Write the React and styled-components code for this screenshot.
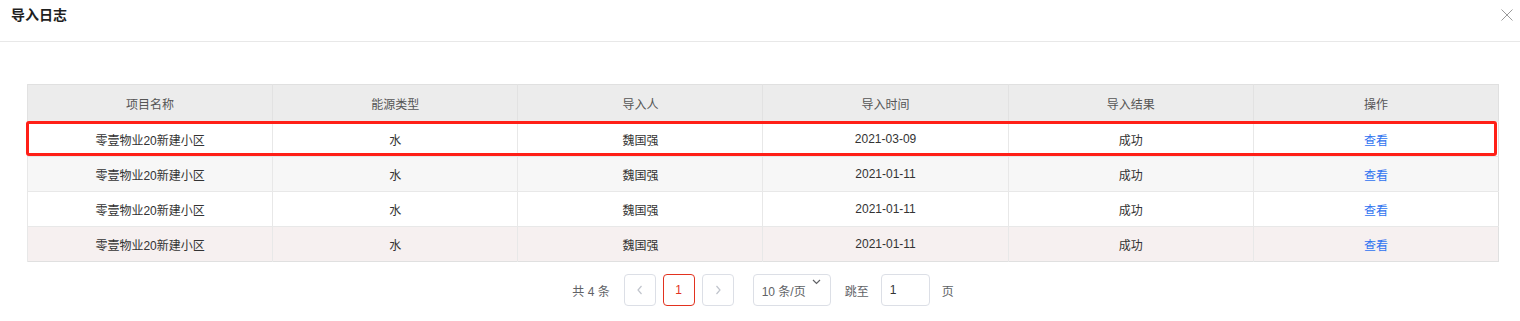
import React from "react";
import styled, { createGlobalStyle } from "styled-components";

const logs = [
  { name: "零壹物业20新建小区", type: "水", user: "魏国强", time: "2021-03-09", result: "成功" },
  { name: "零壹物业20新建小区", type: "水", user: "魏国强", time: "2021-01-11", result: "成功" },
  { name: "零壹物业20新建小区", type: "水", user: "魏国强", time: "2021-01-11", result: "成功" },
  { name: "零壹物业20新建小区", type: "水", user: "魏国强", time: "2021-01-11", result: "成功" },
];

const rowBg = ["#ffffff", "#f7f7f7", "#ffffff", "#f6f0f0"];

function ImportLog() {
  return (
    <Dialog>
      <Header>
        <Title>导入日志</Title>
        <CloseBtn>
          <svg width="12" height="12" viewBox="0 0 12 12">
            <path d="M0.5 0.5 L11.5 11.5 M11.5 0.5 L0.5 11.5" stroke="#9a9a9a" strokeWidth="1" fill="none" />
          </svg>
        </CloseBtn>
      </Header>
      <Body>
        <TableWrap>
          <Table>
            <thead>
              <tr>
                <Th>项目名称</Th>
                <Th>能源类型</Th>
                <Th>导入人</Th>
                <Th>导入时间</Th>
                <Th>导入结果</Th>
                <Th>操作</Th>
              </tr>
            </thead>
            <tbody>
              {logs.map((log, i) => (
                <Row key={i} $bg={rowBg[i]}>
                  <Td>{log.name}</Td>
                  <Td>{log.type}</Td>
                  <Td>{log.user}</Td>
                  <Td>{log.time}</Td>
                  <Td>{log.result}</Td>
                  <Td>
                    <Link>查看</Link>
                  </Td>
                </Row>
              ))}
            </tbody>
          </Table>
          <Highlight />
        </TableWrap>
        <Pager>
          <Total>共 4 条</Total>
          <PageBtns>
            <PageBtn $muted>
              <svg width="8" height="10" viewBox="0 0 8 10">
                <path d="M5.5 1 L2 5 L5.5 9" stroke="#c0c4cc" strokeWidth="1.2" fill="none" />
              </svg>
            </PageBtn>
            <PageBtn $active>1</PageBtn>
            <PageBtn $muted>
              <svg width="8" height="10" viewBox="0 0 8 10">
                <path d="M2.5 1 L6 5 L2.5 9" stroke="#c0c4cc" strokeWidth="1.2" fill="none" />
              </svg>
            </PageBtn>
          </PageBtns>
          <SizeSelect>
            10 条/页
            <Caret>
              <svg width="9" height="6" viewBox="0 0 9 6">
                <path d="M1 1 L4.5 4.5 L8 1" stroke="#606266" strokeWidth="1.2" fill="none" />
              </svg>
            </Caret>
          </SizeSelect>
          <Jump>
            跳至
            <JumpInput>1</JumpInput>
            页
          </Jump>
        </Pager>
      </Body>
    </Dialog>
  );
}

const GlobalStyle = createGlobalStyle`
  body {
    margin: 0;
    background: #fff;
    font-family: "Liberation Sans", "Noto Sans CJK SC", sans-serif;
  }
`;

const Dialog = styled.div`
  width: 1520px;
  height: 321px;
  background: #fff;
`;

const Header = styled.div`
  height: 42px;
  border-bottom: 1px solid #e8e8e8;
  display: flex;
  align-items: flex-start;
  justify-content: space-between;
  padding: 0 7px 0 11px;
  box-sizing: border-box;
`;

const Title = styled.div`
  font-size: 14px;
  font-weight: bold;
  color: #1f1f1f;
  line-height: 20px;
  margin-top: 5px;
`;

const CloseBtn = styled.div`
  width: 12px;
  height: 12px;
  margin-top: 9px;
  display: flex;
`;

const Body = styled.div`
  padding: 42px 21px 0 27px;
`;

const TableWrap = styled.div`
  position: relative;
`;

const Table = styled.table`
  width: 100%;
  table-layout: fixed;
  border-collapse: collapse;
  border: 1px solid #e0e0e0;
  font-size: 12px;
`;

const Th = styled.th`
  height: 36px;
  background: #ececec;
  color: #555;
  font-weight: normal;
  border-left: 1px solid #e2e2e2;
  padding: 0;
  text-align: center;
`;

const Row = styled.tr`
  background: ${(p) => p.$bg};
`;

const Td = styled.td`
  height: 34px;
  padding: 0;
  text-align: center;
  color: #333;
  border-top: 1px solid #e8e8e8;
  border-left: 1px solid #e8e8e8;
`;

const Link = styled.span`
  color: #2f73f0;
  cursor: pointer;
`;

const Highlight = styled.div`
  position: absolute;
  left: -1px;
  right: 2px;
  top: 37px;
  height: 35px;
  border: 3px solid #ff1f17;
  border-radius: 3px;
  box-sizing: border-box;
  pointer-events: none;
`;

const Pager = styled.div`
  display: flex;
  align-items: center;
  justify-content: center;
  margin-top: 12px;
  font-size: 12px;
  color: #606266;
`;

const Total = styled.span`
  margin-right: 14px;
`;

const PageBtns = styled.div`
  display: flex;
  gap: 7px;
`;

const PageBtn = styled.div`
  width: 32px;
  height: 32px;
  box-sizing: border-box;
  border: 1px solid ${(p) => (p.$active ? "#e2321f" : "#dcdfe6")};
  border-radius: 4px;
  color: ${(p) => (p.$active ? "#e2321f" : "#c0c4cc")};
  display: flex;
  align-items: center;
  justify-content: center;
`;

const SizeSelect = styled.div`
  position: relative;
  margin-left: 19px;
  width: 78px;
  height: 32px;
  box-sizing: border-box;
  border: 1px solid #dcdfe6;
  border-radius: 4px;
  padding-left: 8px;
  display: flex;
  align-items: center;
`;

const Caret = styled.span`
  position: absolute;
  right: 9px;
  top: 4px;
  display: flex;
`;

const Jump = styled.div`
  display: flex;
  align-items: center;
  margin-left: 14px;
`;

const JumpInput = styled.div`
  width: 49px;
  height: 32px;
  box-sizing: border-box;
  border: 1px solid #dcdfe6;
  border-radius: 4px;
  margin: 0 12px 0 12px;
  padding-left: 8px;
  display: flex;
  align-items: center;
  color: #333;
`;

export default function App() {
  return (
    <>
      <GlobalStyle />
      <ImportLog />
    </>
  );
}
